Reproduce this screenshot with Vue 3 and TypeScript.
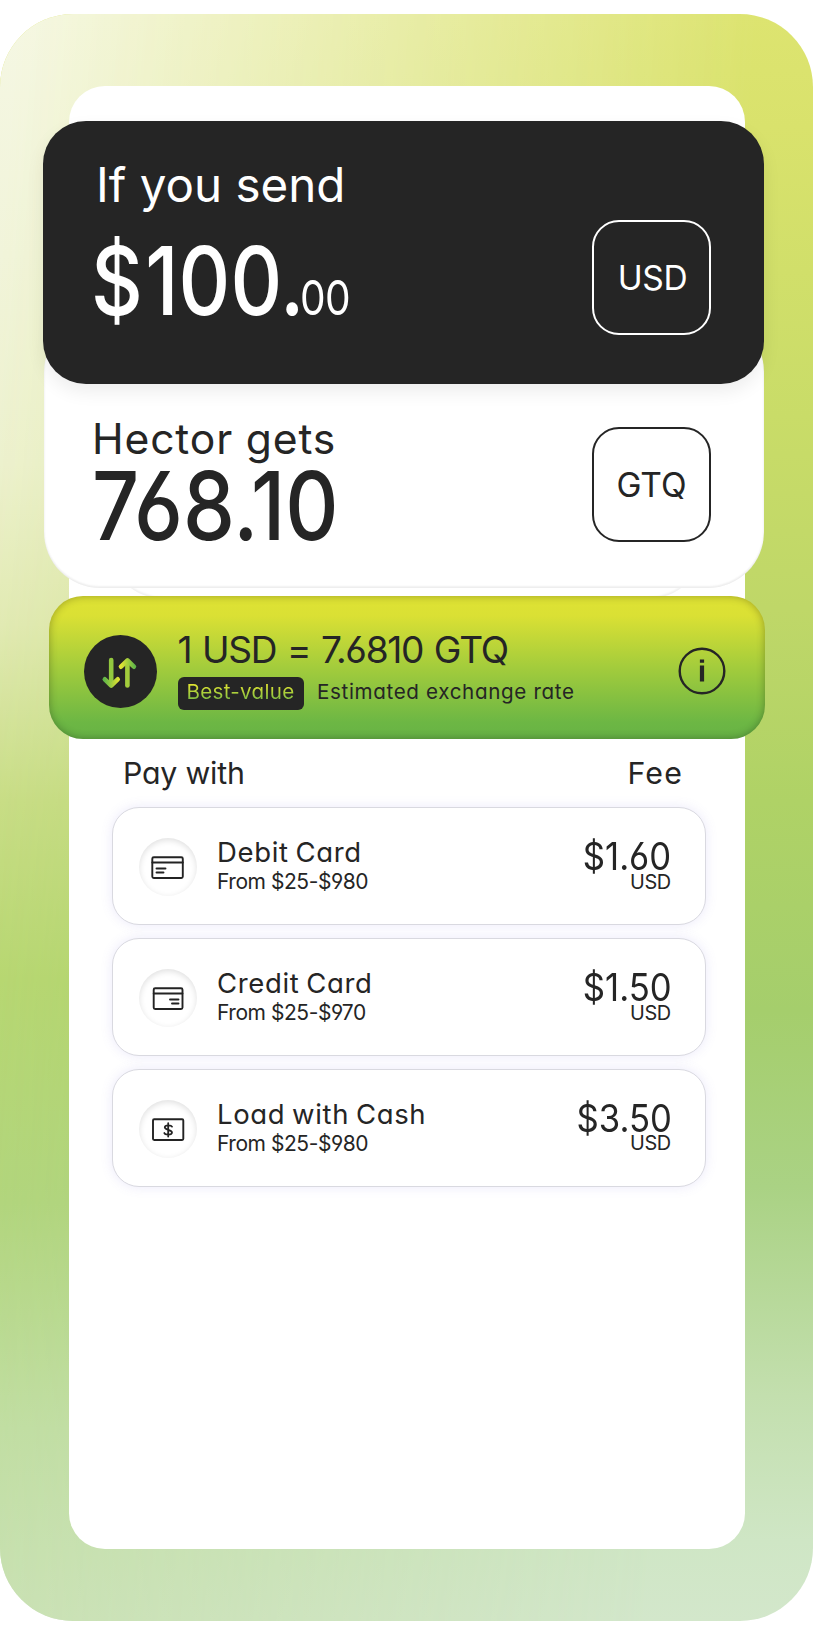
<script setup lang="ts">
type Icon = 'debit' | 'credit' | 'cash'

interface PayMethod {
  icon: Icon
  name: string
  range: string
  fee: string
}

const methods: PayMethod[] = [
  { icon: 'debit', name: 'Debit Card', range: 'From $25-$980', fee: '$1.60' },
  { icon: 'credit', name: 'Credit Card', range: 'From $25-$970', fee: '$1.50' },
  { icon: 'cash', name: 'Load with Cash', range: 'From $25-$980', fee: '$3.50' },
]
</script>

<template>
  <main class="frame">
    <div class="panel">
      <section class="send">
        <div>
          <h2 class="send-title">If you send</h2>
          <p class="amount send-amount"><span class="sign">$</span>100.<span class="cents">00</span></p>
        </div>
        <div class="currency">USD</div>
      </section>

      <section class="receive">
        <div>
          <h2 class="receive-title">Hector gets</h2>
          <p class="amount receive-amount">768.10</p>
        </div>
        <div class="currency">GTQ</div>
      </section>
      <div class="stacked"></div>

      <section class="rate">
        <svg class="swap" viewBox="0 0 73 73" fill="none" stroke-width="4.6" stroke-linecap="round" stroke-linejoin="round">
          <defs>
            <linearGradient id="downHead" gradientUnits="userSpaceOnUse" x1="20" y1="0" x2="35" y2="0">
              <stop offset="0" stop-color="#5fb548" />
              <stop offset="1" stop-color="#e2e432" />
            </linearGradient>
            <linearGradient id="upHead" gradientUnits="userSpaceOnUse" x1="37" y1="0" x2="51" y2="0">
              <stop offset="0" stop-color="#e2e432" />
              <stop offset="1" stop-color="#5fb548" />
            </linearGradient>
          </defs>
          <circle cx="36.5" cy="36.5" r="36.5" fill="#252525" />
          <path d="M27.2 25V49" stroke="#93c83f" />
          <path d="M20.8 44.3l6.4 6.2 6.5-6.2" stroke="url(#downHead)" />
          <path d="M43.4 27V50.5" stroke="#a3cd3c" />
          <path d="M37 31.7l6.5-6.2 6.4 6.2" stroke="url(#upHead)" />
        </svg>
        <div class="rate-text">
          <p class="rate-value">1 USD = 7.6810 GTQ</p>
          <div class="rate-note">
            <span class="badge"><span class="badge-text">Best-value</span></span>
            <span class="estimate">Estimated exchange rate</span>
          </div>
        </div>
        <svg class="info" viewBox="0 0 48 48" fill="none">
          <circle cx="24" cy="24" r="22.3" stroke="#252525" stroke-width="2.4" />
          <path d="M24 12.5v3.2M24 18.5V34.5" stroke="#252525" stroke-width="4.2" />
        </svg>
      </section>

      <header class="list-head">
        <span>Pay with</span>
        <span class="fee-head">Fee</span>
      </header>

      <ul class="list">
        <li v-for="m in methods" :key="m.name" class="method">
          <span class="icon">
            <svg viewBox="0 0 58 58" fill="none" stroke="#232323" stroke-width="1.9" stroke-linejoin="round" stroke-linecap="round">
              <template v-if="m.icon === 'debit'">
                <rect x="13.3" y="19.2" width="30.5" height="20.8" rx="1.5" />
                <path d="M13.3 24.5H43.8M17.5 30.5H26.5M17.5 34.5H24.5" />
              </template>
              <template v-else-if="m.icon === 'credit'">
                <rect x="14.7" y="19.2" width="28.8" height="20.8" rx="1.5" />
                <path d="M14.7 24.5H43.5M31 30.5H39.5M33 34.5H39.5" />
              </template>
              <template v-else>
                <rect x="14" y="19.2" width="30.3" height="20.8" rx="1.2" />
                <path d="M29.2 23.2V36.5M33 26.6C32.2 25 26 24.6 25.8 27.3C25.8 30.3 33 29.3 33 32.5C32.8 35.4 26 35 25.3 33" stroke-width="1.8" />
              </template>
            </svg>
          </span>
          <div class="method-text">
            <p class="method-name">{{ m.name }}</p>
            <p class="method-range">{{ m.range }}</p>
          </div>
          <div class="fee">
            <p class="fee-value">{{ m.fee }}</p>
            <p class="fee-unit">USD</p>
          </div>
        </li>
      </ul>
    </div>
  </main>
</template>

<style>
body {
  background: #fff;
}
</style>

<style scoped>
h2,
p,
ul {
  margin: 0;
  padding: 0;
  font-weight: inherit;
  white-space: nowrap;
}

.frame {
  position: relative;
  box-sizing: border-box;
  width: 813px;
  height: 1607px;
  margin: 14px 0;
  padding: 72px 68.5px;
  border-radius: 73px;
  overflow: hidden;
  font-family: Inter, 'Liberation Sans', sans-serif;
  font-feature-settings: 'cv11', 'cv03', 'cv04';
  font-weight: 400;
  color: #252525;
  background: linear-gradient(180deg, #dde470 0%, #d9e26c 7%, #c9dc68 25%, #bfd768 37%, #afd266 49%, #a5ce6c 62%, #aad284 73%, #c3dfae 86%, #cfe6c5 95%, #d3e7cb 100%);
}

.frame::before {
  content: '';
  position: absolute;
  inset: 0;
  background: linear-gradient(180deg, #f5f7e3 0%, #f1f4da 15%, #edf1cf 28%, #e2eab5 38%, #c9dd87 49%, #b8d772 60%, #b2d57c 74%, #c0dda0 88%, #c8e0b0 100%);
  mask-image: linear-gradient(94deg, #000 2%, transparent 82%);
}

.panel {
  position: relative;
  display: flex;
  flex-direction: column;
  width: 676px;
  height: 1463px;
  border-radius: 36px;
  background: #fff;
}

.send,
.receive {
  position: relative;
  box-sizing: border-box;
  display: flex;
  justify-content: space-between;
  align-items: flex-start;
  flex: none;
}

.send {
  z-index: 3;
  width: 721px;
  height: 262.5px;
  margin: 35px 0 0 -25.5px;
  padding: 36px 53px 0 53px;
  border-radius: 43px;
  background: #252525;
  color: #fff;
  box-shadow: 0 8px 18px rgba(0, 0, 0, 0.07);
}

.receive {
  z-index: 2;
  width: 719.5px;
  height: 272.5px;
  margin: -68px 0 0 -24.5px;
  padding: 98.5px 52.5px 0 48px;
  border-radius: 56px;
  background: #fff;
  box-shadow: inset 0 -2px 2px rgba(0, 0, 0, 0.05), inset 0 0 3px rgba(0, 0, 0, 0.06);
}

.stacked {
  position: relative;
  z-index: 1;
  flex: none;
  width: 594px;
  height: 59px;
  margin: -48px 0 0 40.5px;
  border-radius: 0 0 55px 55px;
  background: #fff;
  box-shadow: inset 0 -2px 2px rgba(0, 0, 0, 0.06);
}

.send-title {
  font-size: 47.5px;
  line-height: 56px;
}

.receive-title {
  font-size: 42.6px;
  line-height: 50px;
  letter-spacing: 0.85px;
}

.amount {
  font-size: 94.9px;
  line-height: 90px;
  font-weight: 500;
  transform-origin: left;
}

.send-amount {
  margin: 22.5px 0 0 -5px;
  transform: scaleX(0.845);
}

.sign {
  letter-spacing: 3px;
}

.cents {
  margin-left: -5px;
  font-size: 48.1px;
  font-weight: 400;
  letter-spacing: -1px;
}

.receive-amount {
  margin-top: -3px;
  transform: scaleX(0.87);
}

.currency {
  box-sizing: border-box;
  width: 119px;
  height: 115px;
  border: 2px solid;
  border-radius: 27px;
  font-size: 33.5px;
  line-height: 112px;
  text-align: center;
}

.send .currency {
  margin-top: 63.4px;
  padding-left: 2px;
  letter-spacing: -0.3px;
}

.receive .currency {
  margin-top: 13.3px;
}

.rate {
  position: relative;
  z-index: 4;
  box-sizing: border-box;
  display: flex;
  align-items: flex-start;
  flex: none;
  width: 716px;
  height: 143px;
  margin: -3px 0 0 -19.5px;
  padding: 0 39.5px 0 35px;
  border-radius: 34px;
  background: linear-gradient(180deg, #dfe334 0%, #dae034 14%, #a3cc3c 50%, #6db744 88%, #66b245 100%);
  box-shadow: inset 0 0 9px rgba(0, 0, 0, 0.3);
}

.swap {
  width: 73px;
  height: 73px;
  margin-top: 39px;
}

.rate-text {
  margin: 31.5px 0 0 20.5px;
}

.rate-value {
  font-size: 37.1px;
  line-height: 44px;
  letter-spacing: -1.3px;
  word-spacing: 1.6px;
}

.rate-note {
  display: flex;
  margin-top: 5.5px;
  font-size: 20.6px;
  line-height: 30.5px;
}

.badge {
  width: 126px;
  height: 33px;
  border-radius: 6px;
  background: #252525;
  text-align: center;
}

.badge-text {
  color: transparent;
  background: linear-gradient(180deg, #e2e432 20%, #7dbd43 85%);
  background-clip: text;
  letter-spacing: 0.28px;
}

.estimate {
  margin-left: 13.5px;
  letter-spacing: 0.65px;
  white-space: nowrap;
}

.info {
  width: 48px;
  height: 48px;
  margin: 51px 0 0 auto;
}

.list-head {
  display: flex;
  justify-content: space-between;
  margin: 15.5px 61.5px 0 54.5px;
  font-size: 30.3px;
  line-height: 36px;
  letter-spacing: -0.2px;
}

.fee-head {
  letter-spacing: 1.2px;
}

.list {
  display: flex;
  flex-direction: column;
  gap: 13.4px;
  margin: 16.8px 0 0 43.5px;
  list-style: none;
}

.method {
  box-sizing: border-box;
  display: flex;
  align-items: flex-start;
  width: 594px;
  height: 117.5px;
  padding: 0 33.5px 0 26px;
  border: 1px solid #d9d9e0;
  border-radius: 27px;
  background: #fff;
  box-shadow: 0 0 12px rgba(120, 110, 220, 0.15);
}

.icon {
  width: 58px;
  height: 58px;
  margin-top: 29.5px;
  border-radius: 50%;
  box-shadow: inset 0 2px 6px rgba(0, 0, 0, 0.13);
}

.icon svg {
  display: block;
  width: 58px;
  height: 58px;
}

.method-text {
  margin: 27.5px 0 0 20px;
}

.method-name {
  font-size: 27.5px;
  line-height: 32px;
  letter-spacing: 0.65px;
  word-spacing: -1.6px;
}

.method-range {
  margin-top: 2px;
  font-size: 21px;
  line-height: 24px;
  letter-spacing: -0.45px;
}

.fee {
  margin: 30.5px 0 0 auto;
  text-align: right;
}

.fee-value {
  font-size: 38.5px;
  line-height: 34px;
  transform: scaleX(0.9);
  transform-origin: right;
}

.fee-unit {
  margin: -1.2px 1px 0 0;
  font-size: 19.9px;
  line-height: 20px;
  letter-spacing: -0.5px;
}
</style>
